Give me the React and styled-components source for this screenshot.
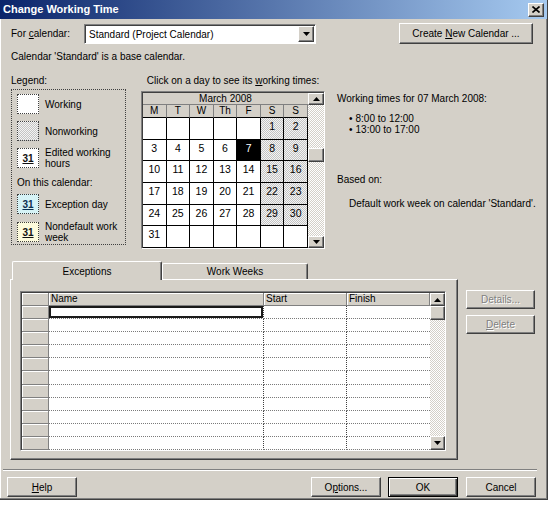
import React from 'react';
import styled, { createGlobalStyle, css } from 'styled-components';

const face = '#d4d0c8';
const fontStack = '"Liberation Sans", Arial, sans-serif';

const Global = createGlobalStyle`
  html, body { margin: 0; padding: 0; background: #fff; }
  body { font-family: ${fontStack}; font-size: 10px; line-height: 13px; color: #000; }
  * { box-sizing: border-box; }
`;

const dither = (a, b) => css`
  background-color: ${b};
  background-image: conic-gradient(${a} 25%, ${b} 0 50%, ${a} 0 75%, ${b} 0);
  background-size: 2px 2px;
`;

const raised = css`
  border: 1px solid;
  border-color: #fff #404040 #404040 #fff;
  box-shadow: inset -1px -1px #808080;
`;

const sunken = css`
  border: 1px solid;
  border-color: #808080 #fff #fff #808080;
`;

const Dialog = styled.div`
  width: 548px;
  height: 500px;
  background: ${face};
  display: flex;
  flex-direction: column;
  border-right: 1px solid #404040;
  border-bottom: 1px solid #404040;
  box-shadow: inset -1px -1px #808080, inset 1px 0 #fff;
`;

const TitleBar = styled.div`
  height: 19px;
  flex: none;
  display: flex;
  align-items: center;
  justify-content: space-between;
  padding: 0 3px 0 3px;
  background: linear-gradient(to right, #0a246a, #a6caf0);
  color: #fff;
  font-weight: bold;
  font-size: 11px;
`;

const CloseBtn = styled.div`
  width: 16px;
  height: 14px;
  ${raised};
  background: ${face};
  display: flex;
  align-items: center;
  justify-content: center;
`;

const U = styled.span`
  text-decoration: underline;
`;

const TopRow = styled.div`
  display: flex;
  align-items: center;
  height: 21px;
  margin-top: 4px;
  padding: 0 14px 0 11px;
`;

const FieldLabel = styled.span`
  width: ${(p) => p.$w}px;
  flex: none;
  white-space: nowrap;
`;

const Select = styled.div`
  width: 232px;
  height: 20px;
  display: flex;
  align-items: center;
  background: #fff;
  ${sunken};
  box-shadow: inset 1px 1px #404040;
  padding: 2px 1px 1px 4px;
`;

const SelectText = styled.span`
  flex: 1;
  white-space: nowrap;
`;

const Button = styled.button`
  width: ${(p) => p.$w}px;
  height: ${(p) => p.$h || 20}px;
  flex: none;
  margin-left: ${(p) => p.$ml || 0}px;
  padding: 0;
  background: ${face};
  font-family: ${fontStack};
  font-size: 10px;
  color: #000;
  ${raised};
  ${(p) =>
    p.$default &&
    css`
      border: 1px solid #000;
      box-shadow: inset 1px 1px #fff, inset -1px -1px #404040, inset -2px -2px #808080;
    `}
  ${(p) =>
    p.$disabled &&
    css`
      color: #808080;
      text-shadow: 1px 1px #fff;
    `}
`;

const Spacer = styled.div`
  flex: 1;
`;

const InfoLine = styled.div`
  margin-top: 6px;
  padding-left: 11px;
  white-space: nowrap;
`;

const Middle = styled.div`
  display: flex;
  margin-top: 11px;
  padding-left: 11px;
  height: 175px;
  flex: none;
`;

const LegendCol = styled.div`
  width: 115px;
  flex: none;
  display: flex;
  flex-direction: column;
  gap: 2px;
`;

const LegendBox = styled.div`
  height: 156px;
  border: 1px dotted #404040;
  padding: 4px 0 0 5px;
  display: flex;
  flex-direction: column;
`;

const LegendItem = styled.div`
  display: flex;
  align-items: center;
  gap: 6px;
  margin-top: ${(p) => p.$mt || 0}px;
`;

const LegendText = styled.div`
  line-height: 11px;
`;

const LegendHeading = styled.div`
  margin-top: ${(p) => p.$mt || 0}px;
`;

const swatchBg = {
  work: css`background: #fff;`,
  off: dither('#c4c4c4', '#f4f4f4'),
  edited: css`background: #fff;`,
  exception: css`background: #d6f3f6;`,
  nondefault: css`background: #fdfbdc;`,
};

const Swatch = styled.div`
  width: 22px;
  height: 20px;
  flex: none;
  border: 1px dotted #404040;
  display: flex;
  align-items: center;
  justify-content: center;
  font-weight: bold;
  text-decoration: underline;
  color: ${(p) => (p.$kind === 'exception' ? '#0c3050' : '#101010')};
  ${(p) => swatchBg[p.$kind]};
`;

const CalCol = styled.div`
  width: 184px;
  margin-left: 15px;
  flex: none;
  display: flex;
  flex-direction: column;
  align-items: center;
  gap: 4px;
`;

const CalLabel = styled.div`
  white-space: nowrap;
`;

const CalFrame = styled.div`
  width: 184px;
  height: 158px;
  ${sunken};
  display: flex;
`;

const CalInner = styled.div`
  flex: 1;
  display: flex;
  border-top: 1px solid #404040;
  border-left: 1px solid #404040;
  background: #fff;
`;

const CalMain = styled.div`
  flex: 1;
  display: flex;
  flex-direction: column;
`;

const MonthHead = styled.div`
  height: 12px;
  line-height: 12px;
  text-align: center;
  background: ${face};
  border-bottom: 1px solid #808080;
  flex: none;
`;

const CalGrid = styled.div`
  flex: 1;
  display: grid;
  grid-template-columns: repeat(7, 1fr);
  grid-template-rows: 13px repeat(6, 1fr);
`;

const DayHead = styled.div`
  background: ${face};
  border-right: 1px solid #808080;
  border-bottom: 1px solid #000;
  text-align: center;
  line-height: 12px;
`;

const dayBg = {
  work: css`background: #fff;`,
  empty: css`background: #fff;`,
  off: dither('#c4c4c4', '#f4f4f4'),
  sel: css`background: #000; color: #fff;`,
};

const DayCell = styled.div`
  border-right: 1px solid #000;
  border-bottom: 1px solid #000;
  text-align: center;
  padding-top: 2px;
  font-size: 10.5px;
  ${(p) => dayBg[p.$kind]};
`;

const ScrollBar = styled.div`
  width: ${(p) => p.$w}px;
  flex: none;
  display: flex;
  flex-direction: column;
`;

const ScrollBtn = styled.div`
  height: ${(p) => p.$h}px;
  width: ${(p) => (p.$w ? p.$w + 'px' : 'auto')};
  flex: none;
  ${raised};
  background: ${face};
  display: flex;
  align-items: center;
  justify-content: center;
`;

const Track = styled.div`
  flex: 1;
  ${dither('#ffffff', face)};
  padding-top: ${(p) => p.$offset}px;
`;

const Thumb = styled.div`
  height: ${(p) => p.$h}px;
  ${raised};
  background: ${face};
`;

const InfoCol = styled.div`
  margin-left: 12px;
  padding-top: 18px;
  display: flex;
  flex-direction: column;
  white-space: nowrap;
`;

const BulletList = styled.div`
  margin-top: ${(p) => p.$mt}px;
  padding-left: 12px;
  line-height: 11px;
`;

const Bullet = styled.div`
  display: flex;
  gap: 3px;
`;

const Indented = styled.div`
  margin-top: ${(p) => p.$mt || 0}px;
  padding-left: ${(p) => p.$pl || 0}px;
`;

const TabsSection = styled.div`
  display: flex;
  margin-top: 12px;
  padding-left: 10px;
`;

const TabsWrap = styled.div`
  width: 448px;
  flex: none;
  display: flex;
  flex-direction: column;
`;

const TabStrip = styled.div`
  height: 19px;
  display: flex;
  align-items: flex-end;
  padding-left: 2px;
`;

const Tab = styled.div`
  width: ${(p) => p.$w}px;
  height: ${(p) => (p.$active ? 19 : 16)}px;
  margin-bottom: ${(p) => (p.$active ? 0 : 1)}px;
  background: ${face};
  border-top: 1px solid #fff;
  border-left: 1px solid #fff;
  border-right: 1px solid #404040;
  box-shadow: inset -1px 0 #808080;
  border-radius: 2px 2px 0 0;
  text-align: center;
  padding-top: ${(p) => (p.$active ? 3 : 1)}px;
  position: relative;
  z-index: ${(p) => (p.$active ? 1 : 0)};
`;

const Panel = styled.div`
  height: 181px;
  margin-top: -1px;
  border: 1px solid;
  border-color: #fff #404040 #404040 #fff;
  box-shadow: inset -1px -1px #808080;
  padding: 11px 0 0 9px;
`;

const TableFrame = styled.div`
  width: 426px;
  height: 160px;
  ${sunken};
  display: flex;
`;

const TableInner = styled.div`
  flex: 1;
  display: flex;
  border-top: 1px solid #404040;
  border-left: 1px solid #404040;
`;

const TableGrid = styled.div`
  flex: 1;
  display: grid;
  grid-template-columns: 27px 215px 83px 1fr;
  grid-template-rows: 13px repeat(11, 1fr);
  background: #fff;
`;

const HeadCell = styled.div`
  background: ${face};
  border-right: 1px solid #808080;
  border-bottom: 1px solid #808080;
  box-shadow: inset 1px 1px #fff;
  padding-left: 2px;
  line-height: 12px;
`;

const RowHead = styled.div`
  background: ${face};
  border-right: 1px solid #808080;
  border-bottom: 1px solid #808080;
  box-shadow: inset 1px 1px #fff;
`;

const DataCell = styled.div`
  background: #fff;
  border-bottom: 1px dotted #7a7a7a;
  border-right: ${(p) => (p.$last ? 'none' : '1px dotted #404040')};
  ${(p) =>
    p.$focus &&
    css`
      box-shadow: inset 0 0 0 2px #1a1a1a;
    `}
`;

const SideButtons = styled.div`
  margin-left: 8px;
  padding-top: 29px;
  display: flex;
  flex-direction: column;
  gap: 6px;
`;

const Separator = styled.div`
  margin: 9px 10px 0 3px;
  border-top: 1px solid #808080;
  border-bottom: 1px solid #fff;
`;

const BottomRow = styled.div`
  display: flex;
  margin-top: 6px;
  padding: 0 11px 0 7px;
`;

const Arrow = ({ up }) => (
  <svg width="7" height="4" viewBox="0 0 7 4">
    <polygon points={up ? '0,4 7,4 3.5,0' : '0,0 7,0 3.5,4'} fill="#000" />
  </svg>
);

const CloseGlyph = () => (
  <svg width="8" height="7" viewBox="0 0 8 7">
    <path d="M0.5 0.5 L7.5 6.5 M7.5 0.5 L0.5 6.5" stroke="#000" strokeWidth="1.6" />
  </svg>
);

const weeks = [
  [null, null, null, null, null, 1, 2],
  [3, 4, 5, 6, 7, 8, 9],
  [10, 11, 12, 13, 14, 15, 16],
  [17, 18, 19, 20, 21, 22, 23],
  [24, 25, 26, 27, 28, 29, 30],
  [31, null, null, null, null, null, null],
];
const dayNames = ['M', 'T', 'W', 'Th', 'F', 'S', 'S'];

const dayKind = (d, col) => {
  if (d === null) return 'empty';
  if (d === 7) return 'sel';
  if (col >= 5) return 'off';
  return 'work';
};

export default function App() {
  const rows = Array.from({ length: 11 }, (_, i) => i);
  return (
    <>
      <Global />
      <Dialog>
        <TitleBar>
          <span>Change Working Time</span>
          <CloseBtn>
            <CloseGlyph />
          </CloseBtn>
        </TitleBar>

        <TopRow>
          <FieldLabel $w={73}>
            For <U>c</U>alendar:
          </FieldLabel>
          <Select>
            <SelectText>Standard (Project Calendar)</SelectText>
            <ScrollBtn $h={16} $w={16}>
              <Arrow />
            </ScrollBtn>
          </Select>
          <Spacer />
          <Button $w={134} $h={21}>
            Create <U>N</U>ew Calendar ...
          </Button>
        </TopRow>

        <InfoLine>Calendar 'Standard' is a base calendar.</InfoLine>

        <Middle>
          <LegendCol>
            <div>Legend:</div>
            <LegendBox>
              <LegendItem>
                <Swatch $kind="work" />
                <LegendText>Working</LegendText>
              </LegendItem>
              <LegendItem $mt={7}>
                <Swatch $kind="off" />
                <LegendText>Nonworking</LegendText>
              </LegendItem>
              <LegendItem $mt={6}>
                <Swatch $kind="edited">31</Swatch>
                <LegendText>
                  Edited working
                  <br />
                  hours
                </LegendText>
              </LegendItem>
              <LegendHeading $mt={7}>On this calendar:</LegendHeading>
              <LegendItem $mt={5}>
                <Swatch $kind="exception">31</Swatch>
                <LegendText>Exception day</LegendText>
              </LegendItem>
              <LegendItem $mt={7}>
                <Swatch $kind="nondefault">31</Swatch>
                <LegendText>
                  Nondefault work
                  <br />
                  week
                </LegendText>
              </LegendItem>
            </LegendBox>
          </LegendCol>

          <CalCol>
            <CalLabel>
              Click on a day to see its <U>w</U>orking times:
            </CalLabel>
            <CalFrame>
              <CalInner>
                <CalMain>
                  <MonthHead>March 2008</MonthHead>
                  <CalGrid>
                    {dayNames.map((n, i) => (
                      <DayHead key={'h' + i}>{n}</DayHead>
                    ))}
                    {weeks.map((w, r) =>
                      w.map((d, c) => (
                        <DayCell key={r + '-' + c} $kind={dayKind(d, c)}>
                          {d}
                        </DayCell>
                      ))
                    )}
                  </CalGrid>
                </CalMain>
                <ScrollBar $w={16}>
                  <ScrollBtn $h={12}>
                    <Arrow up />
                  </ScrollBtn>
                  <Track $offset={43}>
                    <Thumb $h={14} />
                  </Track>
                  <ScrollBtn $h={12}>
                    <Arrow />
                  </ScrollBtn>
                </ScrollBar>
              </CalInner>
            </CalFrame>
          </CalCol>

          <InfoCol>
            <div>Working times for 07 March 2008:</div>
            <BulletList $mt={8}>
              <Bullet>
                <span>•</span>
                <span>8:00 to 12:00</span>
              </Bullet>
              <Bullet>
                <span>•</span>
                <span>13:00 to 17:00</span>
              </Bullet>
            </BulletList>
            <Indented $mt={38}>Based on:</Indented>
            <Indented $mt={11} $pl={12}>
              Default work week on calendar 'Standard'.
            </Indented>
          </InfoCol>
        </Middle>

        <TabsSection>
          <TabsWrap>
            <TabStrip>
              <Tab $active $w={150}>
                Exceptions
              </Tab>
              <Tab $w={146}>Work Weeks</Tab>
            </TabStrip>
            <Panel>
              <TableFrame>
                <TableInner>
                  <TableGrid>
                    <HeadCell />
                    <HeadCell>Name</HeadCell>
                    <HeadCell>Start</HeadCell>
                    <HeadCell>Finish</HeadCell>
                    {rows.map((r) => (
                      <React.Fragment key={r}>
                        <RowHead />
                        <DataCell $focus={r === 0} />
                        <DataCell />
                        <DataCell $last />
                      </React.Fragment>
                    ))}
                  </TableGrid>
                  <ScrollBar $w={15}>
                    <ScrollBtn $h={13}>
                      <Arrow up />
                    </ScrollBtn>
                    <Track $offset={0}>
                      <Thumb $h={14} />
                    </Track>
                    <ScrollBtn $h={14}>
                      <Arrow />
                    </ScrollBtn>
                  </ScrollBar>
                </TableInner>
              </TableFrame>
            </Panel>
          </TabsWrap>
          <SideButtons>
            <Button $w={69} $h={19} $disabled>
              Details...
            </Button>
            <Button $w={69} $h={19} $disabled>
              <U>D</U>elete
            </Button>
          </SideButtons>
        </TabsSection>

        <Separator />

        <BottomRow>
          <Button $w={70}>
            <U>H</U>elp
          </Button>
          <Spacer />
          <Button $w={70}>
            O<U>p</U>tions...
          </Button>
          <Button $w={70} $ml={7} $default>
            OK
          </Button>
          <Button $w={70} $ml={8}>
            Cancel
          </Button>
        </BottomRow>
      </Dialog>
    </>
  );
}
